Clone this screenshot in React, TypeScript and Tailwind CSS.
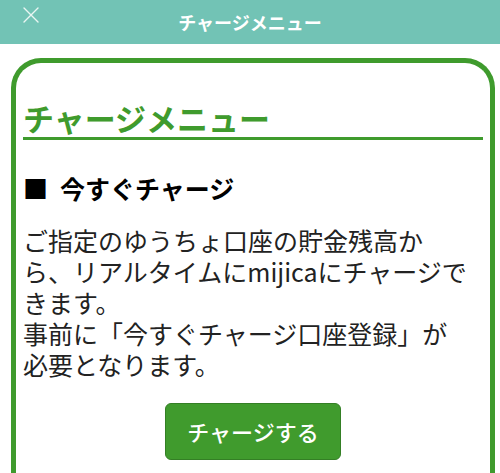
import React from "react";

// Charge menu screen: teal app bar, then a green rounded card with the
// "今すぐチャージ" explanation and a single action button.

const font = { fontFamily: '"Noto Sans CJK JP", "Noto Sans", sans-serif' };

function CloseIcon() {
  return (
    <svg viewBox="0 0 16 16" className="h-4 w-4" fill="none" stroke="#eaf6f3" strokeWidth={1.4} strokeLinecap="round">
      <path d="M1 1 L15 15 M15 1 L1 15" />
    </svg>
  );
}

export default function App() {
  return (
    <div className="h-[473px] w-[500px] overflow-hidden bg-white" style={font}>
      <header className="relative flex h-[44px] items-center justify-center bg-[#72c3b5]">
        <button type="button" className="absolute left-[23px] top-[7px]">
          <CloseIcon />
        </button>
        <h1 className="text-[18px] font-bold leading-none text-white">チャージメニュー</h1>
      </header>

      <div className="ml-[11px] mr-[5px] mt-[14px] h-[500px] rounded-t-[30px] border-[5px] border-b-0 border-[#3f9b2d] px-[7px] pt-[36px]">
        <h2 className="border-b-[3px] border-[#3f9b2d] text-[31px] font-bold leading-[37.5px] text-[#3f9b2d]">
          チャージメニュー
        </h2>

        <h3 className="mt-[33px] flex items-center text-[25px] font-bold leading-[31px] text-black">
          <span>■</span>
          <span className="ml-[12px]">今すぐチャージ</span>
        </h3>

        <p className="mt-[21px] text-[25px] leading-[31px] text-[#222]">
          ご指定のゆうちょ口座の貯金残高か
          <br />
          ら、リアルタイムにmijicaにチャージで
          <br />
          きます。
          <br />
          事前に「今すぐチャージ口座登録」が
          <br />
          必要となります。
        </p>

        <div className="mt-[23px] flex justify-center">
          <button
            type="button"
            className="flex h-[57px] w-[176px] items-center justify-center rounded-[6px] border border-[#347f25] bg-[#409b2d] text-[22px] font-medium text-white"
          >
            チャージする
          </button>
        </div>
      </div>
    </div>
  );
}
